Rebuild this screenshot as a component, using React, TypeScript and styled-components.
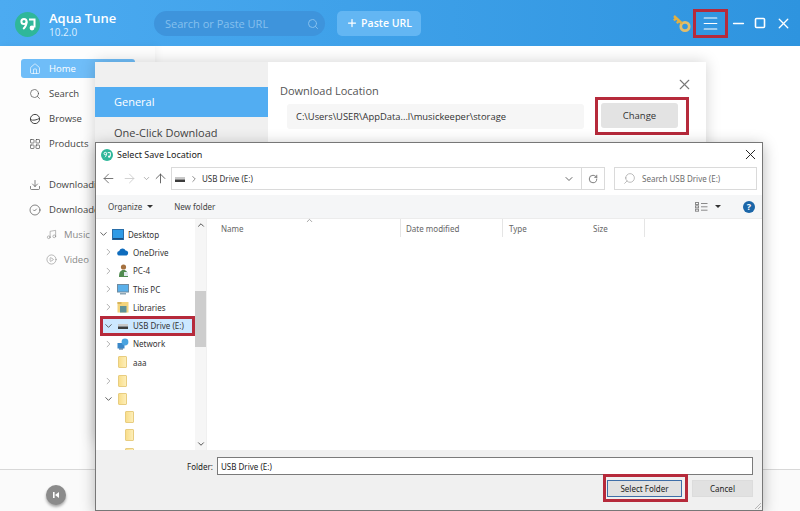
import React from 'react'
import styled, { createGlobalStyle } from 'styled-components'
import {
  ArrowLeft, ArrowRight, ArrowUp, ChevronDown, ChevronRight, ChevronUp, CircleCheck, CirclePlay,
  Download, House, LayoutGrid, Minus, Music, Plus, RotateCw, Search, Square, X, Menu,
} from 'lucide-react'

const GlobalStyle = createGlobalStyle`
  html, body { margin: 0; padding: 0; background: #fff; }
  * { box-sizing: border-box; }
`

const Page = styled.div`
  position: relative;
  width: 800px;
  height: 511px;
  overflow: hidden;
  display: flex;
  flex-direction: column;
  font-family: "Open Sans", "Liberation Sans", sans-serif;
  background: #fff;
`

/* app behind the dialogs */
const Header = styled.header`
  height: 46px;
  flex: none;
  display: flex;
  align-items: center;
  padding-left: 15px;
  background: linear-gradient(90deg, #4cabf1, #2e94df);
  color: #fff;
`
const Brand = styled.div`
  width: 105px;
  margin-left: 9px;
  padding-top: 2px;
`
const BrandName = styled.div`
  font-size: 13px;
  line-height: 15px;
  font-weight: 600;
`
const BrandVersion = styled.div`
  font-size: 10px;
  line-height: 12px;
  color: #dcefff;
`
const SearchPill = styled.div`
  width: 171px;
  height: 25px;
  margin-top: 1px;
  border-radius: 13px;
  background: #3e94dc;
  display: flex;
  align-items: center;
  justify-content: space-between;
  padding: 0 6px 0 11px;
  font-size: 11px;
  color: #85c0ee;
`
const PasteButton = styled.div`
  width: 84px;
  height: 25px;
  margin-left: 12px;
  border-radius: 5px;
  background: #63b6f3;
  display: flex;
  align-items: center;
  justify-content: center;
  gap: 3px;
  font-size: 10.5px;
  font-weight: 600;
`
const WindowControls = styled.div`
  margin-left: auto;
  display: flex;
  align-items: center;
  padding-right: 7px;
`
const RedFrame = styled.div<{ $pad?: string }>`
  border: 3px solid #b62a3b;
  padding: ${p => p.$pad || '0'};
  display: flex;
  align-items: center;
  justify-content: center;
`
const MenuFrame = styled(RedFrame)`
  width: 35px;
  height: 29px;
  margin: 0 2px 0 1px;
`
const WinIcon = styled.span<{ $w: number }>`
  width: ${p => p.$w}px;
  display: flex;
  justify-content: center;
`
const Main = styled.div`
  flex: 1;
  display: flex;
`
const Sidebar = styled.nav`
  width: 155px;
  padding: 13px 20px 0 21px;
  background: #fdfdfd;
  box-shadow: 2px 0 8px rgba(0, 0, 0, 0.05);
`
const NavRow = styled.div<{ $active?: boolean; $sub?: boolean; $gap?: number }>`
  height: 19px;
  margin-bottom: 6px;
  margin-top: ${p => p.$gap || 0}px;
  padding-left: ${p => (p.$sub ? 25 : 8)}px;
  display: flex;
  align-items: center;
  gap: ${p => (p.$sub ? 7 : 8)}px;
  border-radius: 3px;
  font-size: 9.5px;
  background: ${p => (p.$active ? '#6fbdf8' : 'transparent')};
  color: ${p => (p.$active ? '#fff' : p.$sub ? '#8a8a8a' : '#444')};
`
const Footer = styled.footer`
  height: 42px;
  flex: none;
  padding-left: 46px;
  display: flex;
  align-items: center;
  border-top: 1px solid #d8d8d8;
  background: #fafafa;
`
const PrevButton = styled.div`
  width: 20px;
  height: 20px;
  margin-top: 9px;
  border-radius: 50%;
  background: #8b8b8b;
  box-shadow: 0 2px 3px rgba(0, 0, 0, 0.35);
  display: flex;
  align-items: center;
  justify-content: center;
`

/* settings window */
const SettingsWindow = styled.section`
  position: absolute;
  left: 95px;
  top: 62px;
  width: 611px;
  height: 380px;
  display: flex;
  background: #fff;
  box-shadow: 0 0 14px rgba(0, 0, 0, 0.18);
`
const SettingsNav = styled.div`
  width: 173px;
  padding-top: 25px;
  background: #f0f0f0;
`
const SettingsItem = styled.div<{ $active?: boolean }>`
  height: 30px;
  margin-bottom: 1px;
  padding: 0 0 2px 19px;
  display: flex;
  align-items: center;
  font-size: 11px;
  background: ${p => (p.$active ? '#52adf2' : 'transparent')};
  color: ${p => (p.$active ? '#fff' : '#444')};
`
const SettingsPane = styled.div`
  flex: 1;
  padding: 21px 0 0 12px;
`
const PaneTitle = styled.div`
  font-size: 11px;
  line-height: 15px;
  color: #555;
`
const LocationRow = styled.div`
  margin-top: -1px;
  padding-left: 7px;
  display: flex;
  align-items: center;
  gap: 11px;
`
const PathField = styled.div`
  width: 297px;
  height: 25px;
  padding-left: 9px;
  display: flex;
  align-items: center;
  border-radius: 3px;
  background: #f6f6f6;
  font-size: 9.4px;
  color: #333;
`
const ChangeButton = styled.div`
  width: 77px;
  height: 25px;
  border-radius: 3px;
  background: #e3e3e3;
  display: flex;
  align-items: center;
  justify-content: center;
  font-size: 9.5px;
  color: #333;
`
const PaneClose = styled.span`
  position: absolute;
  left: 581px;
  top: 14px;
  display: flex;
`

/* Windows folder picker */
const PickerWindow = styled.section`
  position: absolute;
  left: 95px;
  top: 142px;
  width: 668px;
  height: 369px;
  display: flex;
  flex-direction: column;
  border: 1px solid #777;
  background: #fff;
  box-shadow: 0 3px 14px rgba(0, 0, 0, 0.28);
  font-family: "Noto Sans", "Open Sans", sans-serif;
  font-size: 8px;
  color: #333;
`
const PickerTitle = styled.div`
  height: 23px;
  flex: none;
  padding: 0 3px 0 5px;
  display: flex;
  align-items: center;
  gap: 4px;
  font-size: 9px;
  color: #222;
`
const PickerClose = styled.span`
  margin-left: auto;
  display: flex;
`
const AddressRow = styled.div`
  height: 29px;
  flex: none;
  padding: 1px 4px 5px 5px;
  display: flex;
  align-items: stretch;
`
const NavButtons = styled.div`
  width: 70px;
  display: flex;
  align-items: center;
`
const NavGlyph = styled.span<{ $ml?: number }>`
  display: flex;
  margin-left: ${p => p.$ml || 0}px;
`
const FieldBox = styled.div`
  display: flex;
  align-items: center;
  border: 1px solid #dadada;
  background: #fff;
`
const AddressField = styled(FieldBox)`
  width: 434px;
  padding-left: 2px;
  gap: 3px;
`
const RefreshCell = styled.span`
  margin-left: auto;
  height: 100%;
  display: flex;
  align-items: center;
`
const AddressCaret = styled.span`
  display: flex;
  padding-right: 6px;
`
const RefreshBox = styled.span`
  width: 23px;
  height: 100%;
  display: flex;
  align-items: center;
  justify-content: center;
  border-left: 1px solid #dadada;
`
const SearchField = styled(FieldBox)`
  width: 143px;
  margin-left: 9px;
  padding-left: 8px;
  gap: 6px;
  color: #6d6d6d;
`
const MirroredSearch = styled(Search)`
  transform: scaleX(-1);
`
const Toolbar = styled.div`
  height: 24px;
  flex: none;
  padding: 0 7px 0 12px;
  display: flex;
  align-items: center;
  background: #f5f6f7;
  border-bottom: 1px solid #ececec;
`
const ToolLabel = styled.span`
  display: flex;
  align-items: center;
  gap: 5px;
  margin-right: 21px;
  color: #444;
`
const DownCaret = styled.span`
  width: 0;
  height: 0;
  border: 3px solid transparent;
  border-top: 3px solid #333;
  border-bottom: 0;
`
const ViewTools = styled.div`
  margin-left: auto;
  display: flex;
  align-items: center;
  gap: 7px;
`
const HelpBadge = styled.span`
  width: 12px;
  height: 12px;
  margin-left: 15px;
  border-radius: 50%;
  background: #1b66a8;
  color: #fff;
  font-size: 9px;
  font-weight: 700;
  display: flex;
  align-items: center;
  justify-content: center;
`
const Browser = styled.div`
  flex: 1;
  min-height: 0;
  display: flex;
`
const Tree = styled.div`
  width: 99px;
  padding-top: 6px;
  overflow: hidden;
`
const TreeRow = styled.div<{ $depth?: number; $marked?: boolean }>`
  height: 18.3px;
  padding-left: ${p => p.$depth || 0}px;
  display: flex;
  align-items: center;
  gap: 3px;
  white-space: nowrap;
  color: #333;
  ${p => p.$marked && `
    height: 20px;
    margin: -0.85px 0 -0.85px 4px;
    border: 3px solid #b62a3b;
    background: #cce8ff;
  `}
`
const TreeChevron = styled.span`
  width: 11px;
  flex: none;
  display: flex;
  justify-content: center;
`
const FolderGlyph = styled.span`
  width: 9px;
  height: 12px;
  margin-right: 2px;
  flex: none;
  border-radius: 1px;
  background: linear-gradient(90deg, #f9de8b, #fdeeb9);
  border: 1px solid #e8cd80;
`
const IconBox = styled.span`
  width: 12px;
  flex: none;
  display: flex;
  justify-content: center;
  margin-right: 1px;
`
const TreeScroll = styled.div`
  width: 11px;
  flex: none;
  display: flex;
  flex-direction: column;
  align-items: center;
  justify-content: space-between;
  padding: 1px 0;
  position: relative;
  background: #f6f6f6;
`
const ScrollThumb = styled.span`
  position: absolute;
  left: 0;
  top: 72px;
  width: 11px;
  height: 56px;
  background: #cdcdcd;
`
const ListPane = styled.div`
  flex: 1;
  position: relative;
  border-left: 1px solid #f0f0f0;
`
const ColumnHead = styled.div`
  height: 18px;
  display: flex;
  color: #666;
`
const Column = styled.div<{ $w: number; $pad: number; $open?: boolean }>`
  width: ${p => p.$w}px;
  padding: 4px 0 0 ${p => p.$pad}px;
  border-right: ${p => (p.$open ? 'none' : '1px solid #e5e5e5')};
`
const SortMark = styled.span`
  position: absolute;
  left: 98px;
  top: -3px;
  display: flex;
`
const PickerBottom = styled.div`
  height: 60px;
  flex: none;
  padding: 7px 9px 0 0;
  background: #f0f0f0;
  position: relative;
`
const FolderRow = styled.div`
  display: flex;
  align-items: center;
  justify-content: flex-end;
  gap: 4px;
  color: #222;
`
const FolderInput = styled.div`
  width: 536px;
  height: 18px;
  padding-left: 3px;
  display: flex;
  align-items: center;
  border: 1px solid #7a7a7a;
  background: #fff;
`
const ActionRow = styled.div`
  margin-top: -1px;
  display: flex;
  justify-content: flex-end;
  align-items: center;
  gap: 4px;
`
const DialogButton = styled.div<{ $primary?: boolean; $w: number }>`
  width: ${p => p.$w}px;
  height: 17px;
  display: flex;
  align-items: center;
  justify-content: center;
  background: #e1e1e1;
  border: ${p => (p.$primary ? '1.5px solid #3f6ea8' : '1px solid #dcdcdc')};
  color: #222;
`
const ResizeGrip = styled.svg`
  position: absolute;
  right: 0;
  bottom: 0;
`

function Logo({ size, className }: { size: number; className?: string }) {
  return (
    <svg className={className} width={size} height={size} viewBox="0 0 25 25">
      <circle cx="12.5" cy="12.5" r="12.5" fill="#2fb79a" />
      <circle cx="9" cy="9.5" r="2.6" fill="none" stroke="#fff" strokeWidth="2" />
      <path d="M11.6 9.5c0 3-1 5.5-3.4 7.5" fill="none" stroke="#fff" strokeWidth="2" />
      <path d="M14 7.5h5.5v8" fill="none" stroke="#fff" strokeWidth="2" />
      <circle cx="17" cy="16" r="2.4" fill="#fff" />
    </svg>
  )
}

const HeaderLogo = styled(Logo)`
  flex: none;
  margin-top: 3px;
`
const TitleLogo = styled(Logo)`
  flex: none;
`

function KeyIcon() {
  return (
    <svg width="21" height="21" viewBox="0 0 21 21">
      <circle cx="14" cy="13.5" r="4.2" fill="none" stroke="#e2bd6b" strokeWidth="2.8" />
      <path d="M11 10.5 3 3M5 5 3 7.5M8 8 5.8 10.2" fill="none" stroke="#e2b040" strokeWidth="2.4" />
    </svg>
  )
}

function BrowseIcon() {
  return (
    <svg width="12" height="12" viewBox="0 0 12 12" fill="none" stroke="#444" strokeWidth="1">
      <circle cx="6" cy="6" r="4.6" />
      <path d="M1.2 6.6c3 1.2 6.6.4 9.6-1.4" />
    </svg>
  )
}

function DriveIcon() {
  return (
    <svg width="12" height="8" viewBox="0 0 12 8">
      <rect x="1" y="2" width="10" height="2.5" fill="#c8c8c8" />
      <rect x="1" y="4.5" width="10" height="2.5" fill="#3c3c3c" />
    </svg>
  )
}

function CloudIcon() {
  return (
    <svg width="12" height="8" viewBox="0 0 12 8">
      <path d="M2.5 7.5a2.2 2.2 0 0 1-.3-4.4 3.4 3.4 0 0 1 6.4-.6 2.6 2.6 0 0 1 1 5z" fill="#0f6cbd" />
    </svg>
  )
}

function PersonIcon() {
  return (
    <svg width="11" height="13" viewBox="0 0 11 13">
      <circle cx="5.5" cy="3" r="2.6" fill="#a5713f" />
      <path d="M1 13c0-5 1.5-7 4.5-7s4.5 2 4.5 7z" fill="#4f8a4f" />
      <rect x="6" y="8" width="4" height="4" fill="#dfe8ee" />
    </svg>
  )
}

function MonitorIcon() {
  return (
    <svg width="12" height="11" viewBox="0 0 12 11">
      <rect x="0.5" y="0.5" width="11" height="7.5" fill="#5ab0ea" stroke="#6f8ba0" />
      <rect x="3" y="9" width="6" height="1.5" fill="#8ea6b5" />
    </svg>
  )
}

function DesktopIcon() {
  return (
    <svg width="12" height="11" viewBox="0 0 12 11">
      <rect x="0.5" y="0.5" width="11" height="10" fill="#2f9be6" stroke="#2a6ea8" />
      <rect x="1" y="9" width="10" height="1.5" fill="#1b4f80" />
    </svg>
  )
}

function LibraryIcon() {
  return (
    <svg width="12" height="12" viewBox="0 0 12 12">
      <rect x="0.5" y="1" width="11" height="10.5" fill="#f3d47c" />
      <rect x="3" y="5" width="6.5" height="6.5" fill="#5f9298" />
      <rect x="0.5" y="1" width="4" height="2" fill="#d6b35c" />
    </svg>
  )
}

function NetworkIcon() {
  return (
    <svg width="12" height="12" viewBox="0 0 12 12">
      <rect x="0.5" y="5" width="7" height="5.5" fill="#3a87c8" />
      <circle cx="8" cy="4" r="3.4" fill="#49a3e0" />
      <rect x="2" y="10.5" width="4" height="1" fill="#2c5f8c" />
    </svg>
  )
}

function ViewIcon() {
  return (
    <svg width="13" height="10" viewBox="0 0 13 10" fill="none" stroke="#8a8a8a">
      <rect x="0.5" y="0.5" width="3" height="2" />
      <rect x="0.5" y="3.8" width="3" height="2" />
      <rect x="0.5" y="7.2" width="3" height="2" />
      <path d="M6 1.5h6.5M6 4.8h6.5M6 8.2h6.5" />
    </svg>
  )
}

const Chev = ({ open }: { open?: boolean }) => (
  <TreeChevron>
    {open
      ? <ChevronDown size={12} color="#555" strokeWidth={2} />
      : <ChevronRight size={12} color="#aaa" strokeWidth={2} />}
  </TreeChevron>
)

type TreeItem = { label: string; depth: number; icon: React.ReactNode; open?: boolean; noChev?: boolean }

const treeItems: TreeItem[] = [
  { label: 'Desktop', depth: 2, icon: <DesktopIcon />, open: true },
  { label: 'OneDrive', depth: 7, icon: <CloudIcon /> },
  { label: 'PC-4', depth: 7, icon: <PersonIcon /> },
  { label: 'This PC', depth: 7, icon: <MonitorIcon /> },
  { label: 'Libraries', depth: 7, icon: <LibraryIcon /> },
]

const treeAfter: TreeItem[] = [
  { label: 'Network', depth: 7, icon: <NetworkIcon /> },
  { label: 'aaa', depth: 7, icon: <FolderGlyph />, noChev: true },
  { label: '', depth: 7, icon: <FolderGlyph /> },
  { label: '', depth: 7, icon: <FolderGlyph />, open: true },
  { label: '', depth: 14, icon: <FolderGlyph />, noChev: true },
  { label: '', depth: 14, icon: <FolderGlyph />, noChev: true },
  { label: 'Compatibility 1', depth: 14, icon: <FolderGlyph />, noChev: true },
]

function renderTree(items: TreeItem[]) {
  return items.map((t, i) => (
    <TreeRow key={i} $depth={t.depth}>
      {t.noChev ? <TreeChevron /> : <Chev open={t.open} />}
      <IconBox>{t.icon}</IconBox>
      {t.label}
    </TreeRow>
  ))
}

export default function App() {
  return (
    <Page>
      <GlobalStyle />
      <Header>
        <HeaderLogo size={25} />
        <Brand>
          <BrandName>Aqua Tune</BrandName>
          <BrandVersion>10.2.0</BrandVersion>
        </Brand>
        <SearchPill>
          Search or Paste URL
          <Search size={12} color="#85c0ee" />
        </SearchPill>
        <PasteButton>
          <Plus size={12} strokeWidth={2.5} />
          Paste URL
        </PasteButton>
        <WindowControls>
          <KeyIcon />
          <MenuFrame>
            <Menu size={19} color="#fff" strokeWidth={1.4} />
          </MenuFrame>
          <WinIcon $w={17}><Minus size={19} color="#fff" strokeWidth={1.9} /></WinIcon>
          <WinIcon $w={26}><Square size={12} color="#fff" strokeWidth={3.2} /></WinIcon>
          <WinIcon $w={20}><X size={17} color="#fff" strokeWidth={1.9} /></WinIcon>
        </WindowControls>
      </Header>

      <Main>
        <Sidebar>
          <NavRow $active><House size={12} color="#fff" strokeWidth={1.3} />Home</NavRow>
          <NavRow><Search size={12} color="#444" strokeWidth={1.3} />Search</NavRow>
          <NavRow><BrowseIcon />Browse</NavRow>
          <NavRow><LayoutGrid size={12} color="#444" strokeWidth={1.3} />Products</NavRow>
          <NavRow $gap={22}><Download size={12} color="#444" strokeWidth={1.3} />Downloading</NavRow>
          <NavRow><CircleCheck size={12} color="#444" strokeWidth={1.3} />Downloaded</NavRow>
          <NavRow $sub><Music size={11} color="#8a8a8a" strokeWidth={1.3} />Music</NavRow>
          <NavRow $sub><CirclePlay size={11} color="#8a8a8a" strokeWidth={1.3} />Video</NavRow>
        </Sidebar>
      </Main>

      <Footer>
        <PrevButton>
          <svg width="8" height="8" viewBox="0 0 8 8">
            <rect x="1" y="1" width="1.6" height="6" fill="#fff" />
            <path d="M7 1v6L3 4z" fill="#fff" />
          </svg>
        </PrevButton>
      </Footer>

      <SettingsWindow>
        <SettingsNav>
          <SettingsItem $active>General</SettingsItem>
          <SettingsItem>One-Click Download</SettingsItem>
        </SettingsNav>
        <SettingsPane>
          <PaneTitle>Download Location</PaneTitle>
          <LocationRow>
            <PathField>C:\Users\USER\AppData...l\musickeeper\storage</PathField>
            <RedFrame $pad="3px 8px 4px 3px">
              <ChangeButton>Change</ChangeButton>
            </RedFrame>
          </LocationRow>
        </SettingsPane>
        <PaneClose><X size={17} color="#777" strokeWidth={1.6} /></PaneClose>
      </SettingsWindow>

      <PickerWindow>
        <PickerTitle>
          <TitleLogo size={12} />
          Select Save Location
          <PickerClose><X size={17} color="#222" strokeWidth={1.4} /></PickerClose>
        </PickerTitle>
        <AddressRow>
          <NavButtons>
            <NavGlyph><ArrowLeft size={15} color="#666" strokeWidth={1.4} /></NavGlyph>
            <NavGlyph $ml={6}><ArrowRight size={15} color="#ccc" strokeWidth={1.4} /></NavGlyph>
            <NavGlyph $ml={5}><ChevronDown size={9} color="#999" /></NavGlyph>
            <NavGlyph $ml={2}><ArrowUp size={15} color="#555" strokeWidth={1.4} /></NavGlyph>
          </NavButtons>
          <AddressField>
            <DriveIcon />
            <ChevronRight size={10} color="#777" />
            USB Drive (E:)
            <RefreshCell>
              <AddressCaret><ChevronDown size={12} color="#666" /></AddressCaret>
              <RefreshBox><RotateCw size={10} color="#666" /></RefreshBox>
            </RefreshCell>
          </AddressField>
          <SearchField>
            <MirroredSearch size={13} color="#999" strokeWidth={1.2} />
            Search USB Drive (E:)
          </SearchField>
        </AddressRow>
        <Toolbar>
          <ToolLabel>Organize <DownCaret /></ToolLabel>
          <ToolLabel>New folder</ToolLabel>
          <ViewTools>
            <ViewIcon />
            <DownCaret />
            <HelpBadge>?</HelpBadge>
          </ViewTools>
        </Toolbar>
        <Browser>
          <Tree>
            {renderTree(treeItems)}
            <TreeRow $marked>
              <Chev open />
              <IconBox><DriveIcon /></IconBox>
              USB Drive (E:)
            </TreeRow>
            {renderTree(treeAfter)}
          </Tree>
          <TreeScroll>
            <ChevronUp size={10} color="#555" strokeWidth={2.4} />
            <ScrollThumb />
            <ChevronDown size={10} color="#555" strokeWidth={2.4} />
          </TreeScroll>
          <ListPane>
            <SortMark><ChevronUp size={9} color="#888" /></SortMark>
            <ColumnHead>
              <Column $w={194} $pad={14}>Name</Column>
              <Column $w={102} $pad={5}>Date modified</Column>
              <Column $w={84} $pad={6} $open>Type</Column>
              <Column $w={58} $pad={6}>Size</Column>
            </ColumnHead>
          </ListPane>
        </Browser>
        <PickerBottom>
          <FolderRow>
            Folder:
            <FolderInput>USB Drive (E:)</FolderInput>
          </FolderRow>
          <ActionRow>
            <RedFrame $pad="3px 3px 2px 1px">
              <DialogButton $primary $w={75}>Select Folder</DialogButton>
            </RedFrame>
            <DialogButton $w={61}>Cancel</DialogButton>
          </ActionRow>
          <ResizeGrip width="9" height="9" viewBox="0 0 9 9" stroke="#b5b5b5">
            <path d="M8 2 2 8M8 5 5 8" />
          </ResizeGrip>
        </PickerBottom>
      </PickerWindow>
    </Page>
  )
}
